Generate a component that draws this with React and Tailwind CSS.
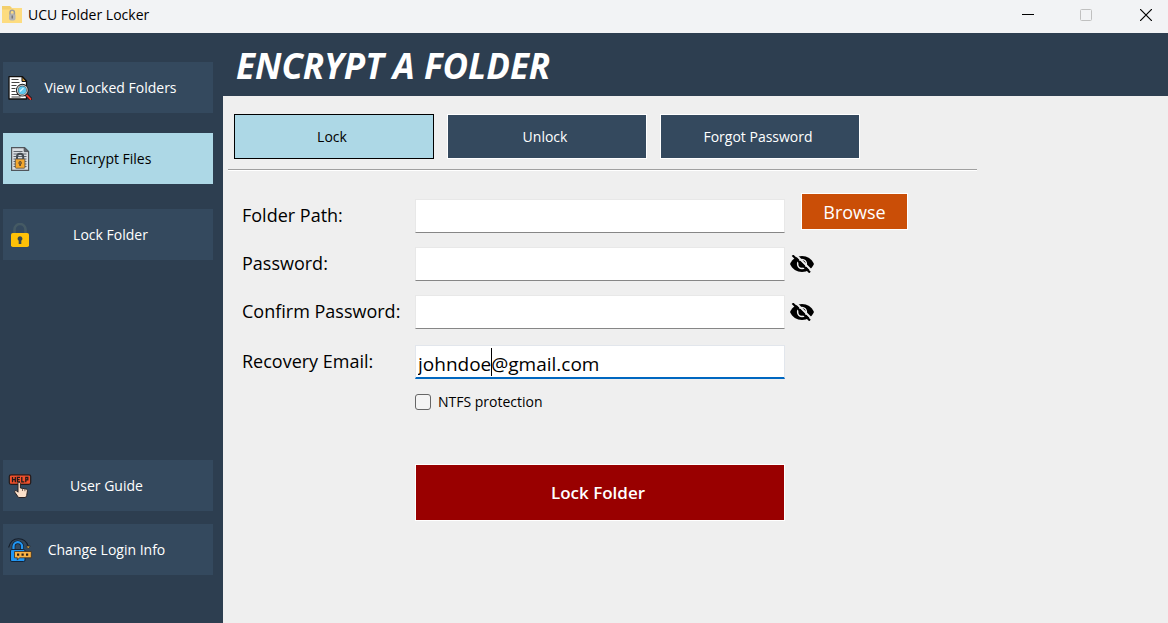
import { useState } from "react";

function AppIcon() {
  return (
    <svg viewBox="0 0 20 18" className="h-[18px] w-5" aria-hidden="true">
      <path d="M0 0h8l2 2h10v14H0z" fill="#f3cf6c" />
      <path d="M0 3.500h8l2-1.500h10v15H0z" fill="#fddc80" />
      <rect x="7" y="7.500" width="6.500" height="7" rx="2" fill="#b4b4b4" />
      <path d="M8 8.500v-2a2.200 2.200 0 0 1 4.400 0v2" fill="none" stroke="#9a9a9a" strokeWidth="1.500" />
      <rect x="9.500" y="9.500" width="1.500" height="3" fill="#777" />
    </svg>
  );
}

function SearchDocIcon() {
  return (
    <svg viewBox="0 0 24 24" className="size-6 shrink-0" aria-hidden="true">
      <path d="M1 .7h13.500l4 4.300v18H1z" fill="#fff" stroke="#111" strokeWidth="1.300" strokeLinejoin="round" />
      <path d="M14 .7 18.500 5.500H14z" fill="#c98d2d" stroke="#111" strokeWidth="1" />
      <path d="M3.500 3.500h7M3.500 6.500h8M3.500 9.500h5M3.500 12.500h4M3.500 15.500h4M3.500 18.500h7M3.500 21h9" stroke="#444" strokeWidth="1.200" />
      <path d="m17.800 18.300 5 5" stroke="#111" strokeWidth="3.400" strokeLinecap="round" />
      <path d="m18.500 19 4 4" stroke="#e8392f" strokeWidth="1.900" strokeLinecap="round" />
      <circle cx="14.300" cy="14.200" r="5.200" fill="#5fc8ef" stroke="#222" strokeWidth="2.400" />
      <circle cx="14.300" cy="14.200" r="4.900" fill="none" stroke="#ccc" strokeWidth="1.100" />
      <path d="m12 15.500 3.500-3.500" stroke="#d5f4ff" strokeWidth="1.200" />
    </svg>
  );
}

function EncryptedDocIcon() {
  return (
    <svg viewBox="0 0 24 24" className="size-6 shrink-0" aria-hidden="true">
      <path d="M3.600.600h13l4 4v18.800h-17z" fill="#d9dde2" stroke="#50555c" strokeWidth="1.200" />
      <path d="M16.200.600v4h4.400z" fill="#60666e" stroke="#50555c" />
      <path d="M5.500 4.500h9M5.500 7h13M5.500 9.500h13M5.500 12h13M5.500 14.500h13M5.500 17h13M5.500 19.500h13" stroke="#60666e" strokeWidth="1.200" />
      <path d="M9 12.500V9.800a3.100 3.100 0 0 1 6.200 0v2.700" fill="none" stroke="#454b52" strokeWidth="2" />
      <rect x="7.300" y="12" width="9.600" height="9.200" rx=".8" fill="#f5a72e" stroke="#5a5148" strokeWidth=".8" />
      <path d="M12.100 14a1.900 1.900 0 0 1 .8 3.500v1.500h-1.600v-1.500a1.900 1.900 0 0 1 .8-3.500z" fill="#5a4631" />
      <circle cx="12.100" cy="15.900" r=".6" fill="#f5a72e" />
    </svg>
  );
}

function PadlockIcon() {
  return (
    <svg viewBox="0 0 24 24" className="size-6 shrink-0" aria-hidden="true">
      <path d="M6.500 10V6.500a5.500 5.500 0 0 1 11 0V10" fill="none" stroke="#455a64" strokeWidth="2.600" />
      <rect x="3" y="10" width="18" height="14" rx="1.800" fill="#ffc107" />
      <path d="M12 13.200a2.500 2.500 0 0 1 1.300 4.600V21h-2.600v-3.200a2.500 2.500 0 0 1 1.300-4.600z" fill="#37474f" />
    </svg>
  );
}

function HelpIcon() {
  return (
    <svg viewBox="0 0 24 24" className="size-6 shrink-0" aria-hidden="true">
      <rect x="1.300" y=".8" width="21.400" height="9.600" rx="1.800" fill="#f2502b" stroke="#211b1c" strokeWidth="1.200" />
      <path d="M4.500 3v5.200M7.300 3v5.200M4.500 5.600h2.800M12 3.300H9.400v4.600H12M9.400 5.600h2.200M13.800 3v4.900h2.500M17.800 8.200V3.300h2v2.500h-2" fill="none" stroke="#211b1c" strokeWidth="1.300" />
      <path d="M10 9.500c0-1.600 2.400-1.600 2.400 0V14l5.600 1c1 .2 1.500.9 1.400 2l-.7 4.500-1.100 2H10.500L7 18.500c-1-1.600.7-2.700 1.900-1.500l1.100 1.200z" fill="#fbe0ca" stroke="#2a2223" strokeWidth="1" strokeLinejoin="round" />
      <path d="M14.500 14.500V17M16.900 15v2.200" stroke="#59473f" strokeWidth=".8" />
    </svg>
  );
}

function LoginIcon() {
  return (
    <svg viewBox="0 0 24 24" className="size-6 shrink-0" aria-hidden="true">
      <path d="M.6 9.500C2 3.800 6 .7 10.500.7c4.800 0 8.200 2.800 9.700 7.500" fill="none" stroke="#151d29" strokeWidth="1.100" />
      <path d="m18 8.200 2.300 2.500 2-2.700z" fill="#f4b13e" stroke="#151d29" strokeWidth=".6" />
      <path d="M5.500 12V8.500a4.300 4.300 0 0 1 8.600 0V12" fill="none" stroke="#111b29" strokeWidth="3.600" />
      <path d="M5.500 12.500v-4a4.300 4.300 0 0 1 8.600 0v4" fill="none" stroke="#2196f3" strokeWidth="2.300" />
      <rect x="2.500" y="11.500" width="14.500" height="12" rx="1.400" fill="#2196f3" stroke="#111b29" strokeWidth=".9" />
      <path d="M6.500 13.500h16.800v6.300H11.500l-2.200 2.300v-2.300H6.500z" fill="#f9b142" stroke="#3b2d21" strokeWidth=".8" />
      <path d="M9 16.600h2.200M13.500 16.600h2.200M18 16.600h2.200" stroke="#2c211a" strokeWidth="2.200" />
    </svg>
  );
}

function EyeIcon({ crossed }) {
  return (
    <svg viewBox="0 0 24 18" className="h-[18px] w-6" aria-hidden="true">
      <path d="M0 9C2.300 3.700 6.800 1 12 1s9.700 2.700 12 8c-2.300 5.300-6.800 8-12 8S2.300 14.300 0 9z" fill="#000" />
      <circle cx="12" cy="9" r="4.400" fill="none" stroke="#efefef" strokeWidth="1.500" />
      {crossed && (
        <>
          <path d="M4.500-1.500 22.500 16.500" stroke="#efefef" strokeWidth="2" />
          <path d="M2.500.300 20 17.500" stroke="#000" strokeWidth="2.200" />
        </>
      )}
    </svg>
  );
}

function NavButton({ icon, label, active = false, narrow = false }) {
  return (
    <button
      type="button"
      aria-current={active ? "page" : undefined}
      className={`flex h-[51px] w-full items-center pl-[5px] text-sm ${narrow ? "pr-8" : "pr-6"} ${
        active ? "bg-[#add8e6] text-black" : "bg-[#34495e] text-white"
      }`}
    >
      {icon}
      <span className="flex-1 whitespace-nowrap text-center">{label}</span>
    </button>
  );
}

function Tab({ label, active = false }) {
  return (
    <button
      type="button"
      aria-pressed={active}
      className={`h-[45px] w-[200px] border pr-1 text-sm ${
        active ? "border-black bg-[#add8e6] text-black" : "border-white bg-[#34495e] text-white"
      }`}
    >
      {label}
    </button>
  );
}

const labelClass = "w-[173px] shrink-0 whitespace-nowrap pb-0.5 text-lg leading-8";
const inputClass =
  "h-[34px] w-[370px] border border-[#e8e8e8] border-b-[#868686] bg-white px-0.5 text-[19px] outline-none";

function PasswordRow({ id, label }) {
  const [visible, setVisible] = useState(false);
  return (
    <div className="flex items-center">
      <label htmlFor={id} className={labelClass}>{label}</label>
      <input id={id} type={visible ? "text" : "password"} className={inputClass} />
      <button
        type="button"
        aria-label={visible ? "Hide" : "Show"}
        onClick={() => setVisible(!visible)}
        className="ml-[5px]"
      >
        <EyeIcon crossed={!visible} />
      </button>
    </div>
  );
}

export default function App() {
  return (
    <div className="flex min-h-screen flex-col bg-[#efefef] font-['Open_Sans','Noto_Sans',sans-serif] text-black">
      <header className="flex h-[33px] items-center justify-between bg-[#f2f3f5] pb-1">
        <div className="flex items-center gap-1.5 pl-0.5">
          <AppIcon />
          <span className="text-sm">UCU Folder Locker</span>
        </div>
        <div className="flex h-full">
          <button type="button" aria-label="Minimize" className="flex w-[58px] items-center justify-center">
            <svg viewBox="0 0 12 12" className="size-3"><path d="M0 5.500h12" stroke="#000" /></svg>
          </button>
          <button type="button" aria-label="Maximize" disabled className="flex w-[58px] items-center justify-center">
            <svg viewBox="0 0 12 12" className="size-3"><rect x=".5" y=".5" width="11" height="11" rx="1" fill="none" stroke="#c0c0c0" /></svg>
          </button>
          <button type="button" aria-label="Close" className="flex w-[53px] items-center justify-center pl-2">
            <svg viewBox="0 0 12 12" className="size-3"><path d="m0 0 12 12M12 0 0 12" stroke="#000" strokeWidth="1.200" /></svg>
          </button>
        </div>
      </header>

      <div className="flex flex-1">
        <nav className="flex w-[223px] shrink-0 flex-col bg-[#2d3e50] pb-12 pl-[3px] pr-2.5 pt-[29px]">
          <NavButton icon={<SearchDocIcon />} label="View Locked Folders" />
          <div className="mt-5">
            <NavButton icon={<EncryptedDocIcon />} label="Encrypt Files" active />
          </div>
          <div className="mt-[25px]">
            <NavButton icon={<PadlockIcon />} label="Lock Folder" />
          </div>
          <div className="mt-auto flex flex-col gap-[13px]">
            <NavButton icon={<HelpIcon />} label="User Guide" narrow />
            <NavButton icon={<LoginIcon />} label="Change Login Info" narrow />
          </div>
        </nav>

        <main className="flex-1">
          <div className="flex h-[63px] items-center bg-[#2d3e50] pl-[13px] pt-0.5">
            <h1 className="text-[35px] font-bold italic leading-none text-white">ENCRYPT A FOLDER</h1>
          </div>

          <div className="flex gap-[13px] pl-[11px] pt-[18px]">
            <Tab label="Lock" active />
            <Tab label="Unlock" />
            <Tab label="Forgot Password" />
          </div>
          <hr className="ml-[5px] mt-2.5 h-0.5 w-[749px] border-b border-t border-b-white border-t-[#a0a0a0]" />

          <form className="flex flex-col gap-3.5 pl-[19px] pt-[22px]" onSubmit={(e) => e.preventDefault()}>
            <div className="flex h-10 items-end">
              <label htmlFor="path" className={labelClass}>Folder Path:</label>
              <input id="path" type="text" className={inputClass} />
              <button
                type="button"
                className="ml-4 h-[37px] w-[107px] self-start border border-white bg-[#ca4e07] text-lg text-white"
              >
                Browse
              </button>
            </div>
            <PasswordRow id="password" label="Password:" />
            <PasswordRow id="confirm" label="Confirm Password:" />
            <div className="flex items-center pt-0.5">
              <label htmlFor="email" className={labelClass}>Recovery Email:</label>
              <div className="relative">
                <input
                  id="email"
                  type="email"
                  defaultValue="johndoe@gmail.com"
                  className="block h-[34px] w-[370px] border border-b-2 border-[#e2e6ec] border-b-[#0067c0] bg-white px-0.5 pt-1 text-[19px] outline-none"
                />
                <span className="absolute left-[76px] top-[3px] h-7 w-px bg-black" />
              </div>
            </div>
            <div className="ml-[173px]">
              <label className="flex w-fit items-center gap-[7px] text-sm leading-[18px]">
                <input
                  type="checkbox"
                  className="size-4 appearance-none rounded-[3px] border border-[#666] bg-[#f4f4f4] checked:bg-[#0067c0]"
                />
                NTFS protection
              </label>
              <button
                type="submit"
                className="mt-[53px] block h-[57px] w-[370px] border border-white bg-[#990000] pr-1 text-[17px] font-semibold text-white"
              >
                Lock Folder
              </button>
            </div>
          </form>
        </main>
      </div>
    </div>
  );
}
